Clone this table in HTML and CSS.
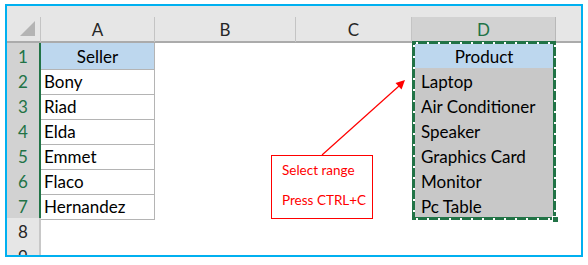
FILE: index.html
```html
<!DOCTYPE html>
<html>
<head>
<meta charset="utf-8">
<link rel="stylesheet" href="styles.css">
</head>
<body>
<div class="frame">
  <div class="topstrip"></div>
  <div class="row head">
    <div class="corner"><svg width="33" height="24" viewBox="0 0 33 24"><polygon points="13,19 28,19 28,4" fill="#b4b4b4"/></svg></div>
    <div class="ch">A</div>
    <div class="ch">B</div>
    <div class="ch">C</div>
    <div class="ch sel">D</div>
    <div class="ch last"></div>
  </div>
  <div class="row"><div class="rh sel">1</div><div class="c a hdr">Seller</div><div class="c"></div><div class="c"></div><div class="c d hdr">Product</div><div class="c"></div></div>
  <div class="row"><div class="rh sel">2</div><div class="c a">Bony</div><div class="c"></div><div class="c"></div><div class="c d">Laptop</div><div class="c"></div></div>
  <div class="row"><div class="rh sel">3</div><div class="c a">Riad</div><div class="c"></div><div class="c"></div><div class="c d">Air Conditioner</div><div class="c"></div></div>
  <div class="row"><div class="rh sel">4</div><div class="c a">Elda</div><div class="c"></div><div class="c"></div><div class="c d">Speaker</div><div class="c"></div></div>
  <div class="row"><div class="rh sel">5</div><div class="c a">Emmet</div><div class="c"></div><div class="c"></div><div class="c d">Graphics Card</div><div class="c"></div></div>
  <div class="row"><div class="rh sel">6</div><div class="c a">Flaco</div><div class="c"></div><div class="c"></div><div class="c d">Monitor</div><div class="c"></div></div>
  <div class="row"><div class="rh sel">7</div><div class="c a">Hernandez</div><div class="c"></div><div class="c"></div><div class="c d">Pc Table</div><div class="c"></div></div>
  <div class="row"><div class="rh">8</div><div class="c"></div><div class="c"></div><div class="c"></div><div class="c"></div><div class="c"></div></div>
  <div class="row"><div class="rh">9</div><div class="c"></div><div class="c"></div><div class="c"></div><div class="c"></div><div class="c"></div></div>
  <div class="marquee"></div>
</div>
<div class="callout">
  <span>Select range</span>
  <span>Press CTRL+C</span>
</div>
<svg class="arrow" width="588" height="265" viewBox="0 0 588 265">
  <line x1="322" y1="155" x2="399" y2="86" stroke="#ff0000" stroke-width="1.2"/>
  <polygon points="405,80 401.5,89.5 395.5,83" fill="#ff0000"/>
</svg>
</body>
</html>
```

FILE: styles.css
```css
html, body {
  margin: 0;
  padding: 0;
  background: #ffffff;
}
body {
  position: relative;
  width: 588px;
  height: 265px;
  overflow: hidden;
  font-family: Lato, "Open Sans", sans-serif;
}
.frame {
  position: relative;
  box-sizing: border-box;
  margin: 4px 0 0 5px;
  width: 578px;
  height: 253px;
  border: 2px solid #00b0f0;
  overflow: hidden;
  background: #ffffff;
}
.topstrip {
  height: 11px;
  background: #e6e6e6;
}
.row {
  display: grid;
  grid-template-columns: 34px 114px 141px 116px 144px 1fr;
  height: 25px;
}
.row.head {
  height: 26px;
  box-sizing: border-box;
  background: #e6e6e6;
  border-bottom: 2px solid #ababab;
}
.corner {
  border-right: 1px solid #c4c4c4;
}
.corner svg {
  display: block;
}
.ch {
  box-sizing: border-box;
  border-right: 1px solid #c4c4c4;
  text-align: center;
  font-size: 17px;
  line-height: 25px;
  color: #262626;
}
.ch.sel {
  background: #d2d2d2;
  color: #217346;
  border-right-color: #b8b8b8;
}
.ch.last {
  border-right: none;
}
.rh {
  box-sizing: border-box;
  background: #e6e6e6;
  border-right: 2px solid #c8c8c8;
  border-bottom: 1px solid #c8c8c8;
  text-align: center;
  font-size: 17px;
  line-height: 25px;
  padding-top: 1px;
  color: #262626;
}
.rh.sel {
  background: #d2d2d2;
  color: #217346;
  border-right-color: #217346;
  border-bottom-color: #bcbcbc;
}
.c {
  box-sizing: border-box;
  font-size: 17px;
  line-height: 25px;
  padding-top: 1px;
  color: #000000;
  padding-left: 3px;
  white-space: nowrap;
  overflow: hidden;
}
.c.a {
  border-right: 1px solid #b4b4b4;
  border-bottom: 1px solid #b4b4b4;
}
.c.d {
  background: #c8c8c8;
  border-bottom: 1px solid #8f8f8f;
  padding-left: 9px;
}
.c.hdr {
  background: #bdd7ee;
  text-align: center;
  padding-left: 0;
}
.c.d.hdr {
  border-bottom-color: #9a9a9a;
}
.marquee {
  position: absolute;
  left: 405px;
  top: 35px;
  width: 144px;
  height: 179px;
  background:
    repeating-linear-gradient(90deg, transparent 0 4px, #ffffff 4px 6px, transparent 6px 11px) left 0 top 1px / 100% 2px no-repeat,
    repeating-linear-gradient(90deg, transparent 0 4px, #ffffff 4px 6px, transparent 6px 11px) left 0 bottom 0 / 100% 2px no-repeat,
    repeating-linear-gradient(180deg, transparent 0 4px, #ffffff 4px 6px, transparent 6px 11px) left 1px top 0 / 2px 100% no-repeat,
    repeating-linear-gradient(180deg, transparent 0 4px, #ffffff 4px 6px, transparent 6px 11px) right 0 top 0 / 2px 100% no-repeat,
    linear-gradient(#217346, #217346) left top / 100% 3px no-repeat,
    linear-gradient(#217346, #217346) left bottom / 100% 3px no-repeat,
    linear-gradient(#217346, #217346) left top / 3px 100% no-repeat,
    linear-gradient(#217346, #217346) right top / 3px 100% no-repeat;
}
.marquee::after {
  content: "";
  position: absolute;
  right: -3px;
  bottom: -3px;
  width: 5px;
  height: 5px;
  background: #217346;
  border: 1px solid #ffffff;
}
.callout {
  position: absolute;
  left: 271px;
  top: 155px;
  box-sizing: border-box;
  width: 102px;
  height: 64px;
  border: 1px solid #ff0000;
  background: #ffffff;
  padding: 5px 0 0 10px;
  display: flex;
  flex-direction: column;
  gap: 12px;
  color: #ff0000;
  font-family: Lato, sans-serif;
  font-size: 13.5px;
  line-height: 18px;
  white-space: nowrap;
}
.arrow {
  position: absolute;
  left: 0;
  top: 0;
  pointer-events: none;
}
```
